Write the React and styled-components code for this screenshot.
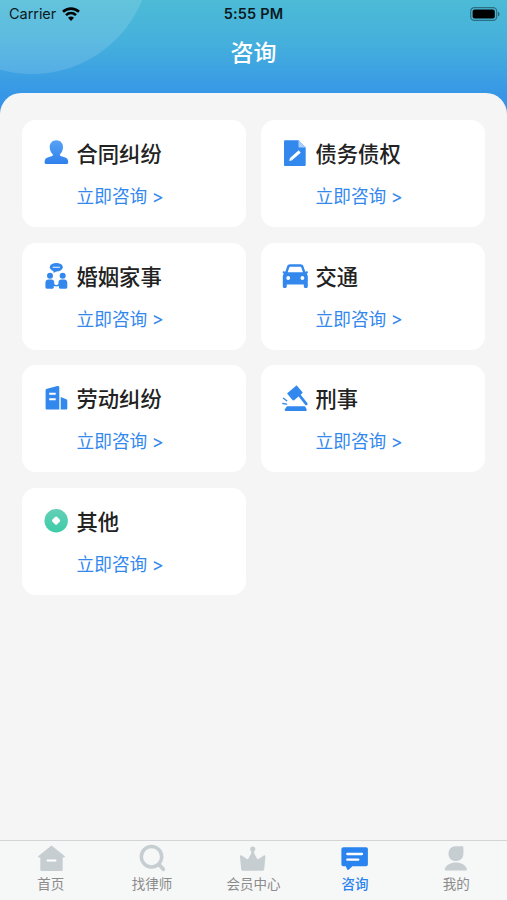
import React from 'react';
import styled, { createGlobalStyle } from 'styled-components';

const GlobalStyle = createGlobalStyle`
  * {
    box-sizing: border-box;
  }

  body {
    margin: 0;
    background: #f5f5f5;
    font-family: Inter, "Noto Sans CJK SC", sans-serif;
  }
`;

const Screen = styled.div`
  display: flex;
  flex-direction: column;
  width: 507px;
  height: 900px;
  overflow: hidden;
  background: #f5f5f5;
`;

// Header Styles
const Header = styled.header`
  flex: none;
  height: 124px;
  margin-bottom: -31px;
  color: #fff;
  background:
    radial-gradient(circle at 32px -45px, rgba(255, 255, 255, 0.13) 118.5px, transparent 119.5px),
    linear-gradient(180deg, #4cbbd6 0%, #45b0dc 34%, #3797e6 76%, #348fec 100%);
`;

const StatusBar = styled.div`
  display: grid;
  grid-template-columns: 1fr auto 1fr;
  align-items: center;
  height: 28px;
  padding: 0 7px 0 9px;
  color: #0a1a20;
  font-size: 14.5px;
  line-height: 28px;
`;

const Carrier = styled.div`
  display: flex;
  align-items: center;
  gap: 6px;
  letter-spacing: -0.05px;
`;

const Clock = styled.div`
  font-weight: 600;
  letter-spacing: 0.15px;
  margin-right: 2px;
`;

const Battery = styled.svg`
  justify-self: end;
  margin-bottom: 1px;
`;

const PageTitle = styled.h1`
  margin: 0;
  padding-top: 6px;
  font-family: "Noto Sans CJK SC", sans-serif;
  font-size: 23px;
  font-weight: 500;
  line-height: 34px;
  text-align: center;
`;

// Category Styles
const Content = styled.main`
  flex: 1;
  padding: 27px 22px 0;
  border-radius: 21px 21px 0 0;
  background: #f5f5f5;
`;

const CardGrid = styled.div`
  display: grid;
  grid-template-columns: repeat(2, 224px);
  gap: 15.7px 15px;
`;

const Card = styled.section`
  display: grid;
  grid-template-columns: 28px 1fr;
  grid-template-rows: 28px 30px;
  column-gap: 6.5px;
  row-gap: 14px;
  height: 107px;
  padding: 19px 0 0 20px;
  border-radius: 14px;
  background: #fff;
  font-family: "Noto Sans CJK SC", sans-serif;
`;

const CardTitle = styled.h2`
  margin: 0;
  color: #222;
  font-size: 21.3px;
  font-weight: 500;
  line-height: 27px;
`;

const CardLink = styled.a`
  grid-column: 2;
  color: #3388ee;
  font-size: 17.7px;
  line-height: 29px;
`;

const Arrow = styled.span`
  margin-left: 4.5px;
  font-family: Inter, sans-serif;
  font-size: 18px;
  line-height: 1;
  vertical-align: 0.5px;
`;

// Tab Bar Styles
const TabBar = styled.nav`
  display: grid;
  grid-template-columns: repeat(5, 1fr);
  flex: none;
  height: 60px;
  border-top: 1px solid #d3d4d5;
  background: #f6f7f7;
`;

const Tab = styled.div`
  display: flex;
  flex-direction: column;
  align-items: center;
  padding-top: 3px;
  color: ${({ $active }) => ($active ? '#2a84f0' : '#8b8b8b')};
  font-family: "Noto Sans CJK SC", sans-serif;
  font-size: 13.5px;
  font-weight: ${({ $active }) => ($active ? 500 : 400)};
  line-height: 22px;
`;

const Icon = styled.svg.attrs({ viewBox: '0 0 28 28' })`
  display: block;
  width: 28px;
  height: 28px;
  color: ${({ $color }) => $color || '#3388ee'};
  fill: currentColor;
`;

const PersonIcon = () => (
  <Icon>
    <defs>
      <linearGradient id="person" x1="0" y1="0" x2="0" y2="1">
        <stop offset="0" stopColor="#58a3f4" />
        <stop offset="1" stopColor="#2f80ec" />
      </linearGradient>
    </defs>
    <path
      fill="url(#person)"
      d="M14.3 1.2c4 0 6.700 2.800 6.700 6.800 0 3-1.300 5.900-3.100 7.500-.1 1 .5 1.500 1.500 1.800l3.900 1.300c2.200.8 2.900 2.400 2.900 5 0 .9-.5 1.400-1.300 1.400H3.900c-.8 0-1.300-.5-1.300-1.400 0-2.600.7-4.200 2.900-5l3.900-1.300c1-.3 1.600-.8 1.500-1.800C9 13.900 7.700 11 7.700 8c0-4 2.700-6.800 6.600-6.800z"
    />
  </Icon>
);

const DocumentIcon = () => (
  <Icon>
    <path d="M4.300 1.300h13.200l7.200 7.300v17.100c0 .8-.5 1.300-1.300 1.300H4.300c-.8 0-1.300-.5-1.300-1.300V2.600c0-.8.5-1.300 1.300-1.300z" />
    <path fill="#a9cef9" d="M17.500 1.300l7.200 7.300h-6c-.8 0-1.200-.4-1.200-1.200z" />
    <path stroke="#fff" strokeWidth="3" d="M10 20.100l8.700-7.600" />
    <path fill="#fff" d="M8.200 21.900l.8-3.200 2.200 2.500z" />
  </Icon>
);

const CoupleIcon = () => (
  <Icon>
    <ellipse cx="14.300" cy="5.300" rx="6.500" ry="4.200" />
    <path d="M11.300 8l.4 3 3-2z" />
    <path stroke="#d3e6fc" strokeWidth="1.200" d="M10.700 5.300h7.200" />
    <circle cx="8" cy="13.800" r="3" />
    <circle cx="20.700" cy="13.800" r="3" />
    <path d="M6.500 17.600h3c1.700 0 2.500.9 2.700 2.700l.1 2 2 1 2.100-1 .1-2c.2-1.800 1-2.700 2.700-2.700h3c2.200 0 3.100 1.500 3.100 4v3.500c0 1-.5 1.700-1.500 1.700h-5.200c-1.100 0-1.700-.7-1.700-1.800v-1l-2.600.5-2.500-.5v1c0 1.100-.6 1.800-1.700 1.800H5c-1 0-1.600-.7-1.600-1.700v-3.500c0-2.500.9-4 3.100-4z" />
  </Icon>
);

const CarIcon = () => (
  <Icon>
    <path
      fillRule="evenodd"
      d="M9.300 2.300h10c1.800 0 2.800.8 3.300 2.400l1.700 5 1.500-.5c1.100-.3 1.600 1 .8 1.700l-.8.8c.7.900 1 1.800 1 3.100v9.500c0 1.200-.6 1.800-1.700 1.800h-.5c-1.200 0-1.800-.6-1.800-1.800v-1.700h-17v1.700c0 1.200-.6 1.800-1.800 1.800h-.5c-1.100 0-1.700-.6-1.700-1.800v-9.500c0-1.300.3-2.200 1-3.100l-.8-.8c-.8-.7-.3-2 .8-1.700l1.500.5 1.700-5c.5-1.600 1.500-2.400 3.300-2.400zm.5 2.400c-.9 0-1.400.3-1.700 1.200l-1.400 4.300h15.200l-1.400-4.300c-.3-.9-.8-1.200-1.700-1.200z"
    />
    <circle cx="7.200" cy="16" r="1.900" fill="#fff" />
    <circle cx="21.400" cy="16" r="1.900" fill="#fff" />
  </Icon>
);

const BuildingIcon = () => (
  <Icon>
    <path d="M5 4.700l10.400-2.600c1.100-.3 1.900.3 1.900 1.400v22H4.900c-.9 0-1.300-.4-1.300-1.300V6.400c0-1 .5-1.500 1.400-1.700zM18.700 13l5 2c1.100.4 1.600 1 1.600 2.100v7.100c0 .9-.4 1.300-1.300 1.300h-5.300z" />
    <path stroke="#fff" strokeWidth="1.900" d="M7.200 9.700h6.500M7.200 15.200h6.500" />
  </Icon>
);

const GavelIcon = () => (
  <Icon>
    <path stroke="currentColor" strokeWidth="2.800" strokeLinecap="round" d="M17 9.500l8.200 10.300" />
    <path d="M6.800 8.700l8-6.700 6.500 7.300-8.200 7z" />
    <path stroke="currentColor" strokeWidth="1.500" strokeLinecap="round" d="M7 9.500l5.300 6.200M15.400 2.200l5.400 6.200" />
    <path stroke="currentColor" strokeWidth="1.400" strokeLinecap="round" d="M2.500 14.300l3.200 2.500M1.900 19.500l3.700.6" />
    <path d="M6.500 22.300h16.800c.7 0 1.100.3 1.300.9l1.100 2.300c.3.800-.1 1.400-.9 1.400H4.700c-.8 0-1.200-.6-.9-1.400l1.400-2.300c.3-.6.600-.9 1.300-.9z" />
  </Icon>
);

const OtherIcon = () => (
  <Icon>
    <defs>
      <linearGradient id="other" x1="0" y1="0" x2="0" y2="1">
        <stop offset="0" stopColor="#64cfb6" />
        <stop offset="1" stopColor="#3dcca8" />
      </linearGradient>
    </defs>
    <circle cx="14.200" cy="13.700" r="11.700" fill="url(#other)" />
    <rect x="10.800" y="10.300" width="6.600" height="6.600" rx="1.500" fill="#fff" transform="rotate(45 14.100 13.600)" />
  </Icon>
);

const HomeIcon = () => (
  <Icon $color="#c7ced2">
    <path d="M13.500 2.300c.7-.6 1.300-.6 2 0l12 9.700c.7.600.4 1.500-.5 1.500h-1.300v12c0 1-.5 1.600-1.500 1.600H4.800c-1 0-1.500-.6-1.500-1.600v-12H2c-.9 0-1.200-.9-.5-1.500z" />
    <path stroke="#fff" strokeWidth="2" strokeLinecap="round" d="M10.500 16.500h8" />
  </Icon>
);

const SearchIcon = () => (
  <Icon $color="#c7ced2">
    <circle cx="13.500" cy="12.700" r="10.200" fill="none" stroke="currentColor" strokeWidth="3.500" />
    <path stroke="currentColor" strokeWidth="3.800" strokeLinecap="round" d="M21 20.500l4.300 4.800" />
  </Icon>
);

const CrownIcon = () => (
  <Icon $color="#c7ced2">
    <circle cx="13.700" cy="5" r="2.600" />
    <path d="M12.600 6.500h2.200l.6 3.300 2.800 5c.3.600.8.700 1.300.3l5.300-3.500c1-.7 1.800-.1 1.600 1.100l-1.200 12.200c-.1 1.200-.8 1.800-2 1.800H4.200c-1.200 0-1.900-.6-2-1.800L1 12.700c-.2-1.200.6-1.800 1.600-1.100l5.300 3.500c.5.400 1 .3 1.300-.3l2.800-5z" />
  </Icon>
);

const ChatIcon = () => (
  <Icon $color="#2a84f0">
    <path d="M2.700 3.300h22.200c1.300 0 2 .7 2 2v14.900c0 1.300-.7 2-2 2H11.500l-3.600 3.300c-.8.7-1.500.6-1.900-.4l-1.200-2.900H2.400c-1.300 0-2-.7-2-2V5.300c0-1.300.7-2 2.300-2z" />
    <path stroke="#fff" strokeWidth="2.300" strokeLinecap="round" d="M6.300 10h14.700M6.300 15.700h11" />
  </Icon>
);

const MineIcon = () => (
  <Icon $color="#c7ced2">
    <path d="M13.700 2.300h6.500c.8 0 1.200.4 1.200 1.200v6.200c0 4.400-3.200 7.300-7.500 7.300s-7.400-2.900-7.400-7.300 2.900-7.400 7.200-7.400zM13.900 18.500c5.500 0 9.200 2.300 10.900 6.200.4 1-.1 1.800-1.100 1.800H4c-1 0-1.500-.8-1.100-1.800 1.700-3.900 5.500-6.200 11-6.200z" />
  </Icon>
);

const categories = [
  { title: '合同纠纷', icon: PersonIcon },
  { title: '债务债权', icon: DocumentIcon },
  { title: '婚姻家事', icon: CoupleIcon },
  { title: '交通', icon: CarIcon },
  { title: '劳动纠纷', icon: BuildingIcon },
  { title: '刑事', icon: GavelIcon },
  { title: '其他', icon: OtherIcon },
];

const tabs = [
  { label: '首页', icon: HomeIcon },
  { label: '找律师', icon: SearchIcon },
  { label: '会员中心', icon: CrownIcon },
  { label: '咨询', icon: ChatIcon, active: true },
  { label: '我的', icon: MineIcon },
];

const App = () => (
  <Screen>
    <GlobalStyle />

    {/* Header Section */}
    <Header>
      <StatusBar>
        <Carrier>
          Carrier
          <svg width="18" height="14" viewBox="0 0 18 14" fill="none" stroke="#000" strokeWidth="2.600">
            <path d="M1 4.800c4.500-4.300 11.500-4.300 16 0M4 8.100c2.900-2.700 7.100-2.700 10 0" />
            <path fill="#000" stroke="none" d="M9 14l-3-3.300c1.700-1.500 4.300-1.500 6 0z" />
          </svg>
        </Carrier>
        <Clock>5:55 PM</Clock>
        <Battery width="31" height="14" viewBox="0 0 31 14">
          <rect x="1.700" y=".7" width="26" height="12.600" rx="3.600" fill="none" stroke="#000" strokeOpacity=".4" strokeWidth="1.200" />
          <rect x="3.600" y="2.600" width="22.200" height="8.800" rx="2" />
          <path d="M29 4.700c2 .8 2 3.800 0 4.600z" fillOpacity=".45" />
        </Battery>
      </StatusBar>
      <PageTitle>咨询</PageTitle>
    </Header>

    {/* Category Section */}
    <Content>
      <CardGrid>
        {categories.map(({ title, icon: CategoryIcon }) => (
          <Card key={title}>
            <CategoryIcon />
            <CardTitle>{title}</CardTitle>
            <CardLink>
              立即咨询
              <Arrow>&gt;</Arrow>
            </CardLink>
          </Card>
        ))}
      </CardGrid>
    </Content>

    {/* Tab Section */}
    <TabBar>
      {tabs.map(({ label, icon: TabIcon, active }) => (
        <Tab key={label} $active={active}>
          <TabIcon />
          {label}
        </Tab>
      ))}
    </TabBar>
  </Screen>
);

export default App;
